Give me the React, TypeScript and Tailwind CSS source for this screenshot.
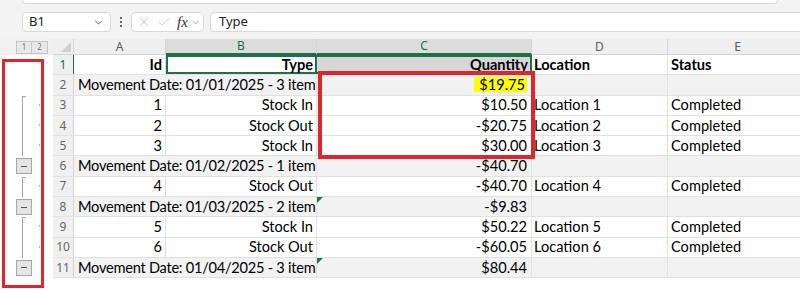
import { ChevronDown, X, Check } from "lucide-react";

type Row =
  | { kind: "head" }
  | { kind: "group"; label: string; qty: string; mark?: boolean; hl?: boolean }
  | { kind: "item"; id: string; type: string; qty: string; loc: string; status: string };

const rows: Row[] = [
  { kind: "head" },
  { kind: "group", label: "Movement Date: 01/01/2025 - 3 item", qty: "$19.75", hl: true },
  { kind: "item", id: "1", type: "Stock In", qty: "$10.50", loc: "Location 1", status: "Completed" },
  { kind: "item", id: "2", type: "Stock Out", qty: "-$20.75", loc: "Location 2", status: "Completed" },
  { kind: "item", id: "3", type: "Stock In", qty: "$30.00", loc: "Location 3", status: "Completed" },
  { kind: "group", label: "Movement Date: 01/02/2025 - 1 item", qty: "-$40.70" },
  { kind: "item", id: "4", type: "Stock Out", qty: "-$40.70", loc: "Location 4", status: "Completed" },
  { kind: "group", label: "Movement Date: 01/03/2025 - 2 item", qty: "-$9.83", mark: true },
  { kind: "item", id: "5", type: "Stock In", qty: "$50.22", loc: "Location 5", status: "Completed" },
  { kind: "item", id: "6", type: "Stock Out", qty: "-$60.05", loc: "Location 6", status: "Completed" },
  { kind: "group", label: "Movement Date: 01/04/2025 - 3 item", qty: "$80.44", mark: true },
];

// outline state per row: "first" starts a bracket, "mid" continues, "btn" is the collapse button
const outline = ["", "", "first", "mid", "mid", "btn", "first", "btn", "first", "mid", "btn"];

const cell = "h-full flex items-center border-r border-[#e1e1e1] overflow-hidden whitespace-nowrap";

function OutlineCell({ state }: { state: string }) {
  return (
    <div className="relative h-[20.3px] w-[53px] shrink-0">
      {(state === "first" || state === "mid") && (
        <>
          <div className="absolute bottom-0 left-[22px] top-0 w-px bg-[#a6a6a6]" />
          {state === "first" && <div className="absolute left-[22px] top-0 h-px w-[4px] bg-[#a6a6a6]" />}
          <div className="absolute left-[39px] top-[8px] h-[2px] w-px bg-[#b4b4b4]" />
        </>
      )}
      {state === "btn" && (
        <div className="absolute left-[16px] top-[2px] flex h-[16px] w-[16px] items-center justify-center border border-[#a8a8a8] bg-[#e4e4e4]">
          <div className="h-px w-[6px] bg-[#555]" />
        </div>
      )}
    </div>
  );
}

function Toolbar() {
  return (
    <div className="h-[39px] bg-[#f3f3f3] font-['Noto_Sans']">
      <div className="mx-[22px] h-[4px] rounded-b-[4px] border-x border-b border-[#dadada] bg-white" />
      <div className="mt-[8px] flex h-[20px] items-center">
        <div className="ml-[22px] flex h-[20px] w-[89px] items-center justify-between rounded-[4px] border border-[#d8d8d8] bg-white pl-[6px] pr-[5px] text-[13px] text-[#222]">
          <span>B1</span>
          <ChevronDown className="h-[13px] w-[13px] text-[#555]" strokeWidth={1.6} />
        </div>
        <div className="flex w-[20px] flex-col items-center gap-[2px]">
          <div className="h-[2px] w-[2px] bg-[#666]" />
          <div className="h-[2px] w-[2px] bg-[#666]" />
          <div className="h-[2px] w-[2px] bg-[#666]" />
        </div>
        <div className="flex h-[20px] w-[73px] items-center rounded-[4px] border border-[#d8d8d8] bg-white pl-[5px]">
          <X className="h-[14px] w-[14px] text-[#b8b8b8]" strokeWidth={1.3} />
          <Check className="ml-[6px] h-[14px] w-[14px] text-[#b8b8b8]" strokeWidth={1.3} />
          <span className="ml-[6px] font-['Liberation_Serif'] text-[15px] italic text-[#333]">fx</span>
          <ChevronDown className="ml-[2px] h-[11px] w-[11px] text-[#888]" strokeWidth={1.5} />
        </div>
        <div className="ml-[6px] flex h-[20px] flex-1 items-center rounded-l-[4px] border border-r-0 border-[#d8d8d8] bg-white pl-[8px] text-[13px] text-[#222]">
          Type
        </div>
      </div>
    </div>
  );
}

function HeaderRow() {
  const cols: { l: string; w: string; sel?: boolean }[] = [
    { l: "A", w: "w-[92px]" },
    { l: "B", w: "w-[151px]", sel: true },
    { l: "C", w: "w-[215px]", sel: true },
    { l: "D", w: "w-[136px]" },
    { l: "E", w: "w-[140px]" },
  ];
  return (
    <div className="flex h-[16px] font-['Noto_Sans'] text-[12px] leading-none">
      <div className="flex w-[53px] shrink-0 items-center bg-[#f0f0f0] pl-[16px]">
        <div className="flex h-[13px] w-[16px] items-center justify-center border border-[#c4c4c4] bg-[#e8e8e8] text-[8px] text-[#777]">1</div>
        <div className="flex h-[13px] w-[16px] items-center justify-center border border-l-0 border-[#c4c4c4] bg-[#e8e8e8] text-[8px] text-[#777]">2</div>
      </div>
      <div className="flex w-[21px] shrink-0 items-end justify-end border-b border-r border-[#d4d4d4] bg-[#efefef] pb-[2px] pr-[2px]">
        <svg width="10" height="10" viewBox="0 0 10 10">
          <polygon points="10,0 10,10 0,10" fill="#cfcfcf" />
        </svg>
      </div>
      {cols.map((c) => (
        <div
          key={c.l}
          className={`${c.w} flex shrink-0 items-center justify-center border-r border-[#d4d4d4] ${
            c.sel
              ? "border-b-2 border-b-[#1e7145] bg-[#dcdcdc] text-[#1e7145]"
              : "border-b border-b-[#d4d4d4] bg-[#efefef] text-[#5a5a5a]"
          }`}
        >
          {c.l}
        </div>
      ))}
    </div>
  );
}

function SheetRow({ row, n }: { row: Row; n: number }) {
  const gray = row.kind === "group";
  return (
    <div
      className={`flex h-[20.3px] border-b border-[#e1e1e1] font-['Lato'] text-[14.6px] text-black ${
        gray ? "bg-[#f2f2f2]" : "bg-white"
      }`}
    >
      <div
        className={`flex w-[21px] shrink-0 items-center justify-center border-r bg-[#f0f0f0] font-['Noto_Sans'] text-[12px] ${
          n === 1 ? "border-[#1e7145] text-[#1e7145]" : "border-[#d4d4d4] text-[#666]"
        }`}
      >
        {n}
      </div>
      {row.kind === "head" && (
        <>
          <div className={`${cell} w-[92px] justify-end pr-[3px] font-bold`}>Id</div>
          <div className="flex h-full w-[151px] items-center justify-end border-2 border-[#1e7145] bg-white pr-[2px] font-bold">
            Type
          </div>
          <div className="flex h-full w-[215px] items-center justify-end border-y-2 border-r-2 border-[#1e7145] bg-[#d6d6d6] pr-[2px] font-bold">
            Quantity
          </div>
          <div className={`${cell} w-[136px] pl-[2px] font-bold`}>Location</div>
          <div className={`${cell} w-[140px] pl-[3px] font-bold`}>Status</div>
        </>
      )}
      {row.kind === "group" && (
        <>
          <div className={`${cell} w-[243px] pl-[4px] tracking-[-0.25px]`}>{row.label}</div>
          <div className={`${cell} relative w-[215px] justify-end pr-[4px]`}>
            {row.mark && (
              <svg className="absolute left-0 top-0" width="6" height="6" viewBox="0 0 6 6">
                <polygon points="0,0 6,0 0,6" fill="#1e7a35" />
              </svg>
            )}
            {row.hl ? (
              <span className="bg-[#ffff00] pl-[5px] pr-[2px] leading-[15px]">{row.qty}</span>
            ) : (
              row.qty
            )}
          </div>
          <div className={`${cell} w-[136px]`} />
          <div className={`${cell} w-[140px]`} />
        </>
      )}
      {row.kind === "item" && (
        <>
          <div className={`${cell} w-[92px] justify-end pr-[3px]`}>{row.id}</div>
          <div className={`${cell} w-[151px] justify-end pr-[3px]`}>{row.type}</div>
          <div className={`${cell} w-[215px] justify-end pr-[4px]`}>{row.qty}</div>
          <div className={`${cell} w-[136px] pl-[2px]`}>{row.loc}</div>
          <div className={`${cell} w-[140px] pl-[3px]`}>{row.status}</div>
        </>
      )}
    </div>
  );
}

export default function App() {
  return (
    <div className="relative h-[290px] w-[800px] overflow-hidden bg-white">
      <Toolbar />
      <HeaderRow />
      <div className="flex">
        <div className="flex flex-col">
          {outline.map((s, i) => (
            <OutlineCell key={i} state={s} />
          ))}
        </div>
        <div className="flex flex-col">
          {rows.map((r, i) => (
            <SheetRow key={i} row={r} n={i + 1} />
          ))}
        </div>
      </div>

      {/* annotation boxes drawn over the sheet */}
      <div className="pointer-events-none absolute left-[2px] top-[59px] h-[229px] w-[42px] border-[3px] border-[#e0262c]" />
      <div className="pointer-events-none absolute left-[318px] top-[71px] h-[88px] w-[217px] border-[4px] border-[#e0262c]" />
    </div>
  );
}
